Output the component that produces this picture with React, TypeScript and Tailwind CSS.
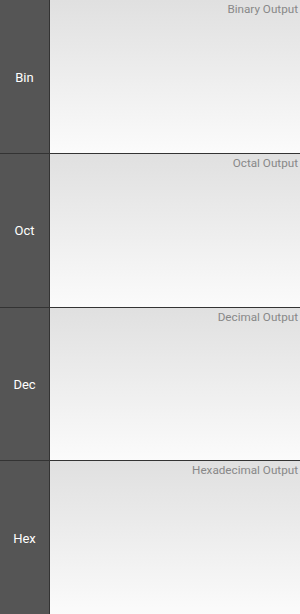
import React from "react";

const rows = [
  { short: "Bin", label: "Binary Output" },
  { short: "Oct", label: "Octal Output" },
  { short: "Dec", label: "Decimal Output" },
  { short: "Hex", label: "Hexadecimal Output" },
];

export default function App() {
  return (
    <div
      className="flex h-[614px] w-[300px] flex-col bg-[#333]"
      style={{ fontFamily: "Roboto, 'Noto Sans', sans-serif" }}
    >
      {rows.map((row, i) => (
        <div key={row.short} className={"flex flex-1 " + (i < rows.length - 1 ? "border-b border-[#333]" : "")}>
          {/* 左侧按钮 */}
          <div className="flex w-[49px] items-center justify-center bg-[#555] pt-[2px] text-[13px] text-white">
            {row.short}
          </div>
          <div className="w-px bg-[#333]" />
          {/* 输出区域 */}
          <div className="flex flex-1 justify-end bg-gradient-to-b from-[#e0e0e0] to-[#fbfbfb] pr-[2px]">
            <span className="text-[11.7px] leading-[19px] text-[#888]">{row.label}</span>
          </div>
        </div>
      ))}
    </div>
  );
}
